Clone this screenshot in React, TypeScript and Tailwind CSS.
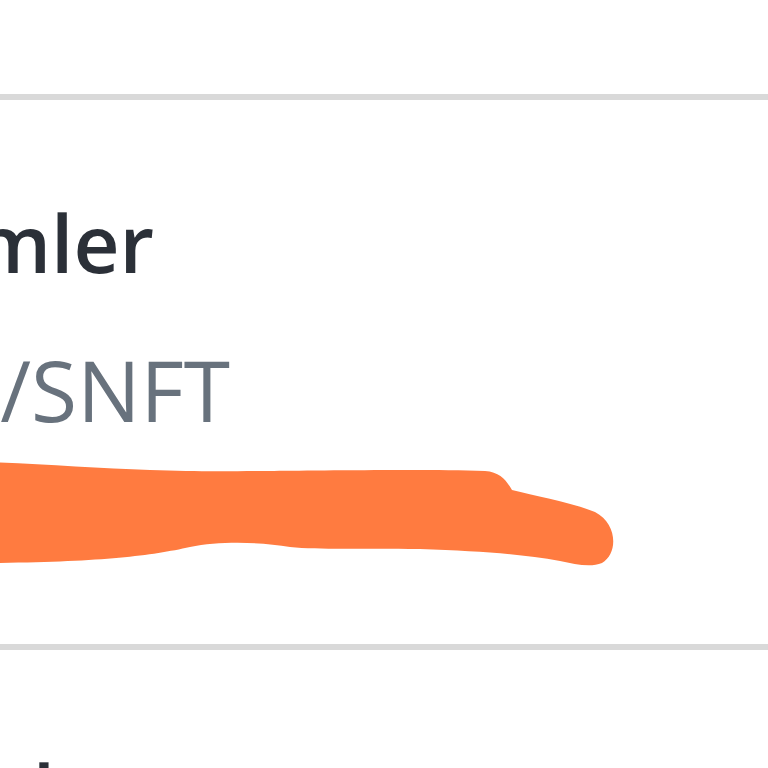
import React from "react";

const rows = [
  { title: "İşlemler", titleEnd: "w-[154px]", subtitle: "NFT/SNFT", subtitleEnd: "w-[230px]", marked: true },
  { title: "Hesaplar", titleEnd: "w-[136px]", subtitle: "Adresler", subtitleEnd: "w-[230px]", marked: false },
];

function BrushMark() {
  return (
    <svg className="block mt-2" width="768" height="140" viewBox="0 0 768 140" aria-hidden="true">
      <path
        d="M-10,22 C40,24 100,28 150,30 S240,31 270,31 S420,29 485,31 C500,32 506,40 512,50 C535,56 570,62 595,72 C618,84 618,114 602,123 C590,128 575,124 560,121 C520,114 480,111 420,109 C360,108 320,110 290,107 C260,102 220,101 190,107 C150,116 100,122 -10,123 Z"
        fill="#ff7b40"
      />
    </svg>
  );
}

export default function App() {
  return (
    <div className="w-[768px] h-[768px] overflow-hidden bg-white font-['Open_Sans',sans-serif]">
      <div className="h-[94px]" />
      {rows.map((row) => (
        <div key={row.title} className="border-t-[6px] border-[#d9d9d9] pt-[102px] pb-[64px]">
          {/* titles overflow to the left edge on purpose */}
          <div className={`${row.titleEnd} flex justify-end whitespace-nowrap`}>
            <span className="text-[80px] leading-[80px] font-semibold text-[#2b3038]">{row.title}</span>
          </div>
          <div className={`${row.subtitleEnd} flex justify-end whitespace-nowrap mt-[66px]`}>
            <span className="text-[84px] leading-[84px] text-[#68727d]">{row.subtitle}</span>
          </div>
          {row.marked ? <BrushMark /> : null}
        </div>
      ))}
    </div>
  );
}
